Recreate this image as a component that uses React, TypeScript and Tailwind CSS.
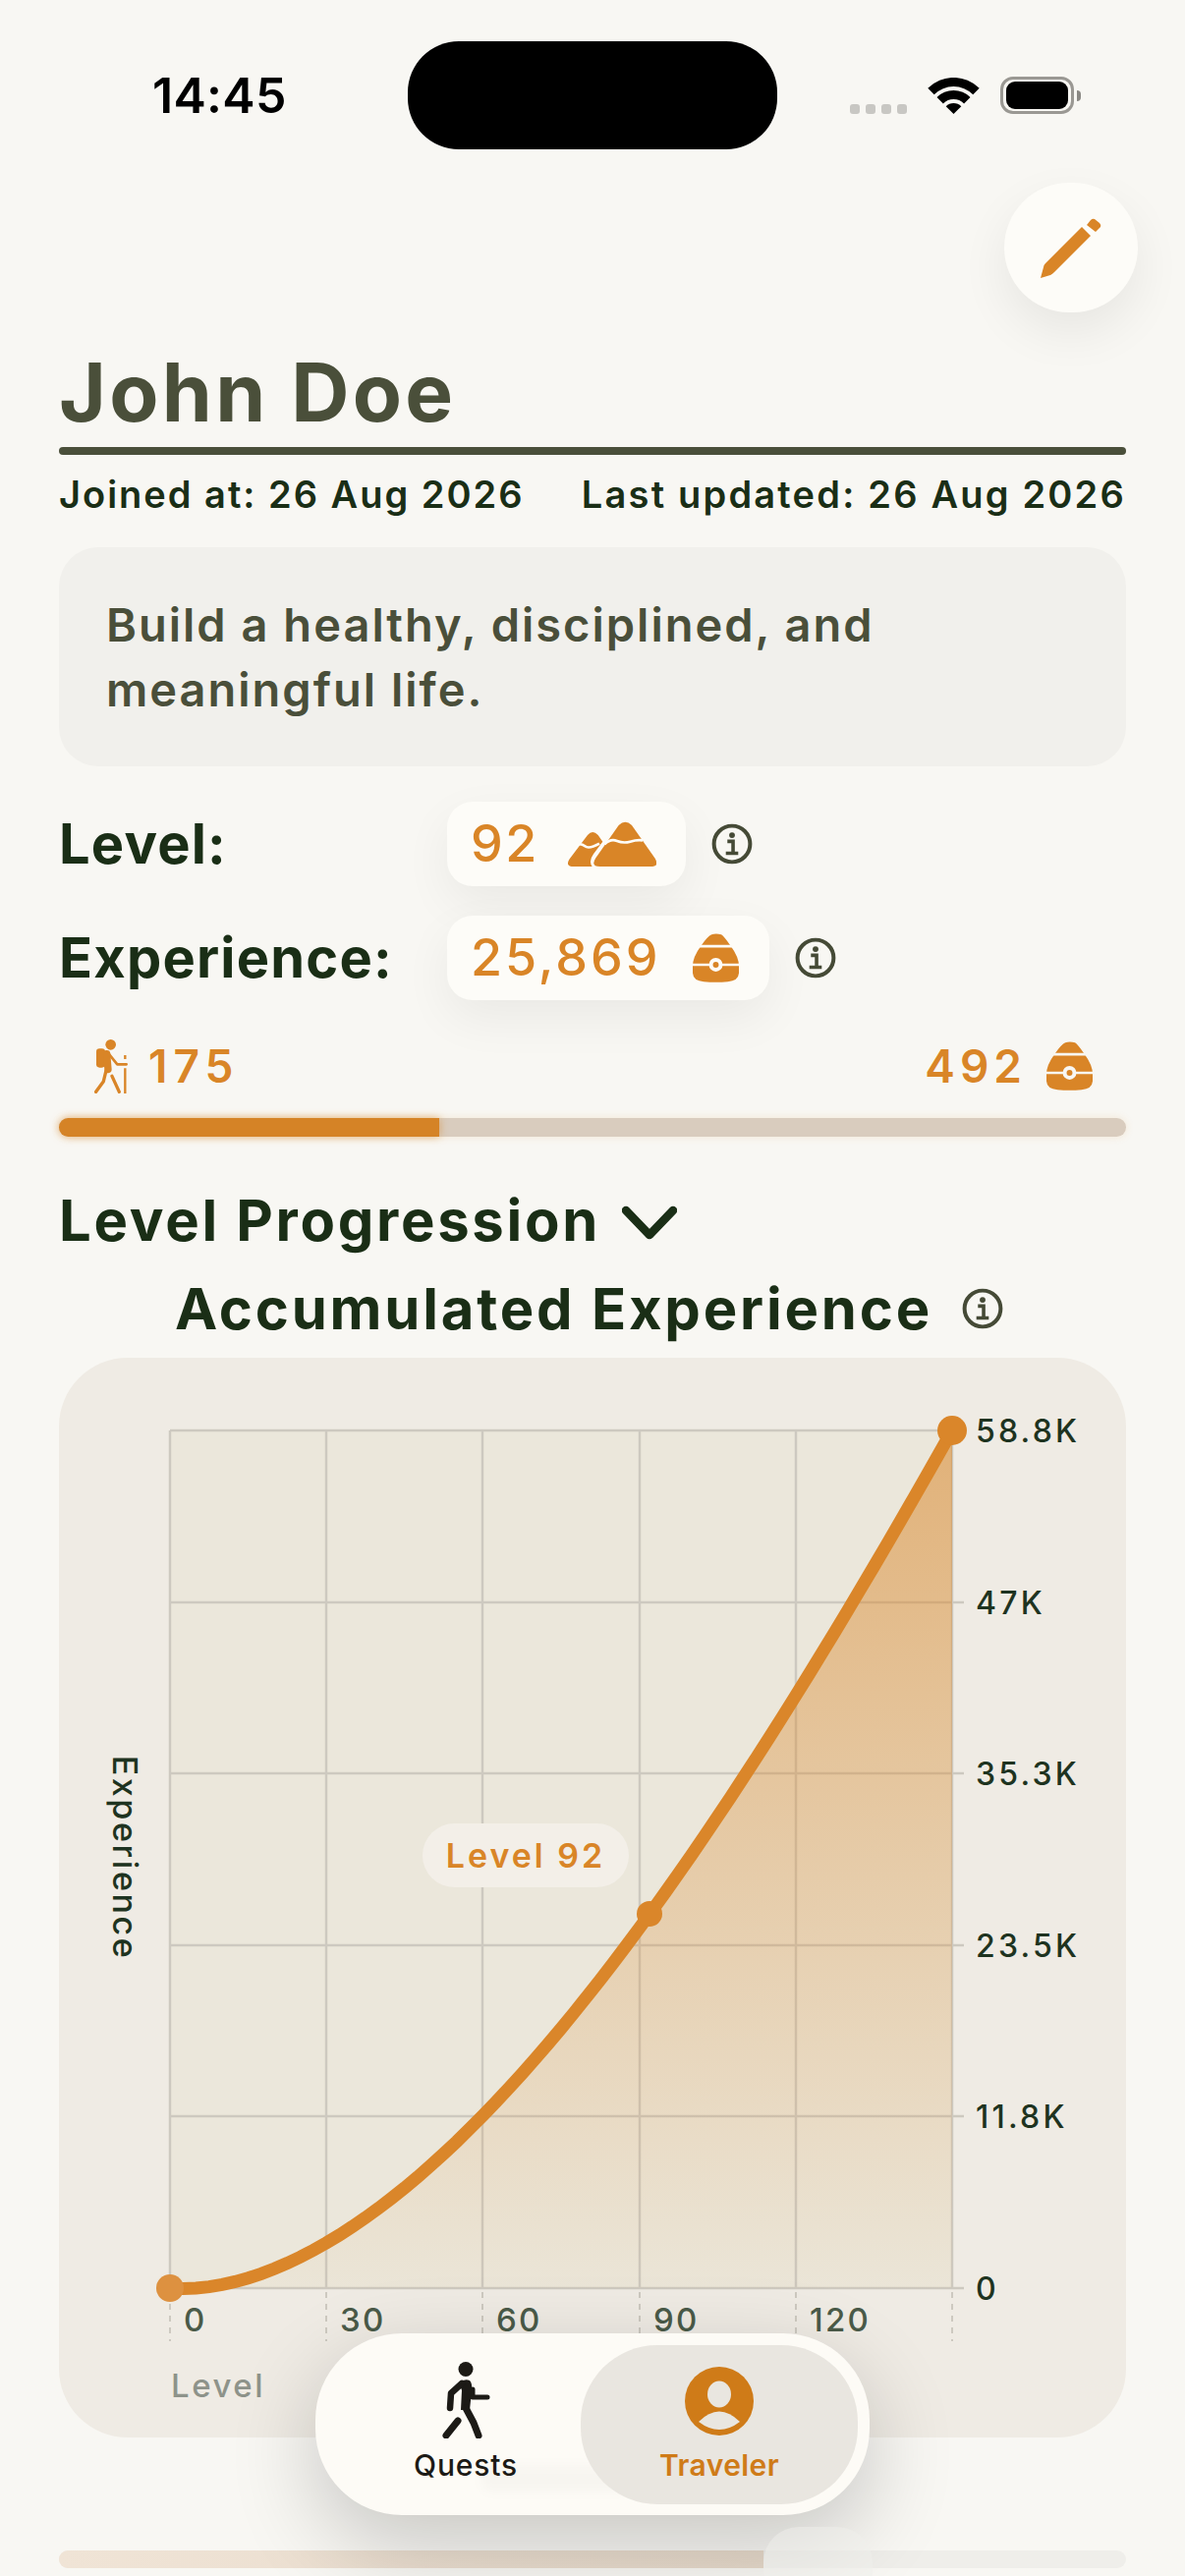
import React from "react";

const ORANGE = "#d98527";

const InfoIcon = () => (
  <svg width="42" height="42" viewBox="0 0 40 40" className="shrink-0">
    <circle cx="20" cy="20" r="17.5" fill="none" stroke="#454a36" strokeWidth="3.8" />
    <circle cx="20" cy="11.5" r="2.8" fill="#454a36" />
    <path d="M15.5 17.5h5.5v11M14 29h12" fill="none" stroke="#454a36" strokeWidth="3.4" />
  </svg>
);

const MountainIcon = () => (
  <svg width="90" height="46" viewBox="0 0 270 138">
    <path d="M155 12Q175-8 195 12L265 112Q282 138 252 138L98 138Q68 138 85 112Z" fill={ORANGE} />
    <path d="M60 42Q75 24 92 42L106 62L78 100Q62 122 74 138L18 138Q-10 138 5 115Z" fill={ORANGE} />
    <path d="M112 70Q130 52 150 60T190 62T228 58" fill="none" stroke="#fdfcf8" strokeWidth="8" />
    <path d="M24 72Q40 66 52 76T96 68" fill="none" stroke="#fdfcf8" strokeWidth="8" />
  </svg>
);

const PotIcon = ({ cut }: { cut: string }) => (
  <svg width="47" height="50" viewBox="0 0 142 150">
    <path d="M58 3Q71-1 88 3Q96 8 116 37Q142 72 142 100L142 122Q140 146 108 148Q71 152 34 148Q2 146 0 122L0 100Q0 72 26 37Q46 8 58 3Z" fill={ORANGE} />
    <path d="M10 39H132M-4 96H146" stroke={cut} strokeWidth="8" />
    <circle cx="71" cy="96" r="21" fill={cut} />
    <circle cx="71" cy="96" r="9" fill={ORANGE} />
  </svg>
);

const HikerIcon = () => (
  <svg width="34" height="55" viewBox="0 0 102 165">
    <circle cx="50" cy="16" r="16" fill={ORANGE} />
    <rect x="6" y="28" width="27" height="58" rx="10" fill={ORANGE} />
    <path d="M38 44L42 92" stroke={ORANGE} strokeWidth="22" strokeLinecap="round" />
    <g fill="none" stroke={ORANGE} strokeWidth="10" strokeLinecap="round" strokeLinejoin="round">
      <path d="M44 44L70 76H98" strokeWidth="8" />
      <path d="M36 95L28 128L5 160" />
      <path d="M54 112L76 160" />
    </g>
    <path d="M94 88V165M94 48V60" stroke={ORANGE} strokeWidth="7" />
  </svg>
);

const WalkIcon = () => (
  <svg width="50" height="78" viewBox="0 0 50 78">
    <circle cx="25" cy="7.5" r="7.5" fill="#1c1a16" />
    <path d="M18 21Q24 17 29 19Q32 22 31 30L29 49L20 49L21 29Z" fill="#1c1a16" />
    <g fill="none" stroke="#1c1a16" strokeLinecap="round" strokeLinejoin="round">
      <path d="M21 22L10 32L9 47" strokeWidth="6.5" />
      <path d="M25 47L33 62L38 75" strokeWidth="7" />
      <path d="M17 60L5 75" strokeWidth="7" />
      <path d="M32 28V36H47" strokeWidth="5" />
    </g>
  </svg>
);

const UserIcon = () => (
  <svg width="70" height="70" viewBox="0 0 70 70">
    <circle cx="35" cy="35" r="35" fill="#cf7b18" />
    <ellipse cx="35" cy="28" rx="12" ry="13.5" fill="#e9e6e0" />
    <path d="M14 56Q35 35 56 56Q35 72 14 56Z" fill="#e9e6e0" />
  </svg>
);

const xTicks = [173, 332, 491, 651, 810, 969];
const yTicks = [
  { y: 1457, label: "58.8K" },
  { y: 1632, label: "47K" },
  { y: 1806, label: "35.3K" },
  { y: 1981, label: "23.5K" },
  { y: 2155, label: "11.8K" },
  { y: 2330, label: "0" },
];
const xLabels = ["0", "30", "60", "90", "120"];

// experience curve, sampled along the plot width
const curve = Array.from({ length: 61 }, (_, i) => {
  const t = i / 60;
  const v = Math.pow(t, 1.75) + 0.22 * (t - 0.4) * (1 - t) * t;
  return `${(173 + t * 796).toFixed(1)},${(2330 - v * 873).toFixed(1)}`;
});

const Chart = () => (
  <div className="mt-[16px] h-[1099px] rounded-[70px] bg-[#efebe4]">
    <svg width="1086" height="1099" viewBox="60 1383 1086 1099" className="block">
      <defs>
        <linearGradient id="area" x1="0" y1="0" x2="0" y2="1">
          <stop offset="0" stopColor={ORANGE} stopOpacity="0.55" />
          <stop offset="1" stopColor={ORANGE} stopOpacity="0.02" />
        </linearGradient>
      </defs>
      <rect x="173" y="1457" width="796" height="873" fill="#ebe7db" />
      {xTicks.map((x) => (
        <g key={x}>
          <line x1={x} y1="1457" x2={x} y2="2330" stroke="#cdc9c0" strokeWidth="2.5" />
          <line x1={x} y1="2334" x2={x} y2="2384" stroke="#cdc9c0" strokeWidth="2" strokeDasharray="6 6" />
        </g>
      ))}
      {yTicks.map((t) => (
        <g key={t.y}>
          <line x1="173" y1={t.y} x2="981" y2={t.y} stroke="#cdc9c0" strokeWidth="2.5" />
          <text x="993" y={t.y + 12} fontSize="32" fontWeight="500" letterSpacing="3.2" fill="#1e3320">
            {t.label}
          </text>
        </g>
      ))}
      {xLabels.map((l, i) => (
        <text key={l} x={xTicks[i] + 14} y="2374" fontSize="33" fontWeight="500" letterSpacing="2.2" fill="#4a5a48">
          {l}
        </text>
      ))}
      <polygon points={`173,2330 ${curve.join(" ")} 969,2330`} fill="url(#area)" />
      <polyline points={curve.join(" ")} fill="none" stroke="#da862a" strokeWidth="13" strokeLinecap="round" />
      <circle cx="173" cy="2330" r="14" fill="#dd9140" />
      <circle cx="661" cy="1949" r="13" fill="#da862a" />
      <circle cx="969" cy="1457" r="15" fill="#da862a" />
      <rect x="430" y="1857" width="210" height="65" rx="32.5" fill="#f3efe8" />
      <text x="535" y="1902" textAnchor="middle" fontSize="34" fontWeight="600" letterSpacing="3" fill={ORANGE}>
        Level 92
      </text>
      <text x="174" y="2441" fontSize="33" fontWeight="500" letterSpacing="2.5" fill="#8e938a">
        Level
      </text>
      <text
        transform="translate(115 1892) rotate(90)"
        textAnchor="middle"
        fontSize="34"
        fontWeight="500"
        letterSpacing="2.6"
        fill="#1e3320"
      >
        Experience
      </text>
    </svg>
  </div>
);

export default function App() {
  return (
    <div className="relative h-[2622px] w-[1206px] overflow-hidden bg-[#f8f7f3] font-['Inter',sans-serif] text-[#1a2e16]">
      {/* status bar */}
      <div className="flex h-[150px] items-start pt-[42px]">
        <div className="flex h-[110px] w-[415px] items-center pl-[155px] text-[50px] font-semibold tracking-[0.3px] text-black">
          14:45
        </div>
        <div className="h-[110px] w-[376px] rounded-[52px] bg-black" />
        <div className="ml-[74px] flex h-[110px] items-start">
          <div className="mt-[64px] flex gap-[6px]">
            {[0, 1, 2, 3].map((i) => (
              <span key={i} className="h-[10px] w-[10px] rounded-[3px] bg-[#c8c7c3]" />
            ))}
          </div>
          <svg width="53" height="37" viewBox="-1 0 53 37" className="ml-[21px] mt-[37px]">
            <path d="M-.7 10.8A37 37 0 0 1 51.7 10.8L45.3 17.2A28 28 0 0 0 5.7 17.2Z" fill="#000" />
            <path d="M8.5 20A24 24 0 0 1 42.5 20L36.1 26.4A15 15 0 0 0 14.9 26.4Z" fill="#000" />
            <path d="M17.7 29.2A11 11 0 0 1 33.3 29.2L25.5 37Z" fill="#000" />
          </svg>
          <div className="ml-[21px] mt-[36px] flex items-center">
            <div className="flex h-[38px] w-[75px] items-center justify-center rounded-[13px] border-[3px] border-[#9a9893]">
              <div className="h-[28px] w-[63px] rounded-[9px] bg-black" />
            </div>
            <div className="ml-[3px] h-[11px] w-[4px] rounded-r-[4px] bg-[#8a8883]" />
          </div>
        </div>
      </div>

      {/* edit button */}
      <div className="mr-[48px] mt-[36px] flex justify-end">
        <div className="flex h-[132px] w-[136px] items-center justify-center rounded-full bg-[#fdfcf8] shadow-[0_20px_50px_rgba(0,0,0,0.07)]">
          <svg width="62" height="61" viewBox="0 0 62 61" fill={ORANGE}>
            <path d="M0 61L3 50Q3 48 5 46L42 9L51 18L14 55Q12 57 10 58Z" />
            <path d="M47 7L51 2Q53 0 55 1L60 5Q62 7 61 9L56 14Z" />
          </svg>
        </div>
      </div>

      <div className="px-[60px]">
        <h1 className="mt-[27px] h-[110px] text-[82px] font-bold leading-[110px] tracking-[3.3px] text-[#4a4f3a]">
          John Doe
        </h1>
        <div className="h-[8px] rounded-full bg-[#4a4f3a]" />
        <div className="mt-[16px] flex h-[48px] items-center justify-between text-[38px] font-semibold leading-[48px] tracking-[2.2px]">
          <span className="tracking-[2px]">Joined at: 26 Aug 2026</span>
          <span>Last updated: 26 Aug 2026</span>
        </div>

        <div className="mt-[30px] h-[223px] rounded-[40px] bg-[#f1f0ec] pl-[48px] pt-[46px] text-[47px] font-semibold leading-[66px] tracking-[2px] text-[#4a4f3a]">
          Build a healthy, disciplined, and
          <br />
          meaningful life.
        </div>

        <div className="mt-[36px] flex h-[86px] items-center">
          <span className="w-[395px] text-[56px] font-bold tracking-[1.2px]">Level:</span>
          <div className="flex h-[86px] w-[243px] items-center rounded-[26px] bg-[#fdfcf8] pl-[24px] text-[52px] font-medium tracking-[2.5px] text-[#d98527] shadow-[0_18px_50px_rgba(0,0,0,0.06)]">
            <span className="w-[99px]">92</span>
            <MountainIcon />
          </div>
          <div className="ml-[26px]">
            <InfoIcon />
          </div>
        </div>
        <div className="mt-[30px] flex h-[86px] items-center">
          <span className="w-[395px] text-[56px] font-bold tracking-[1.2px]">Experience:</span>
          <div className="flex h-[86px] w-[328px] items-center rounded-[26px] bg-[#fdfcf8] pl-[24px] text-[52px] font-medium tracking-[3px] text-[#d98527] shadow-[0_18px_50px_rgba(0,0,0,0.06)]">
            <span className="w-[226px]">25,869</span>
            <PotIcon cut="#fdfcf8" />
          </div>
          <div className="ml-[26px]">
            <InfoIcon />
          </div>
        </div>

        <div className="mt-[38px] flex h-[58px] items-center justify-between pl-[36px] pr-[34px] text-[46px] font-semibold tracking-[5px] text-[#d98527]">
          <div className="flex items-center gap-[21px]">
            <HikerIcon />
            <span className="tracking-[6px]">175</span>
          </div>
          <div className="flex items-center gap-[20px]">
            <span>492</span>
            <PotIcon cut="#f8f7f3" />
          </div>
        </div>
        <div className="mt-[24px] h-[19px] rounded-full bg-[#d9ccbe] shadow-[0_0_8px_rgba(217,133,39,0.15)]">
          <div className="h-full w-[387px] rounded-l-full rounded-r-[4px] bg-[#d58326] shadow-[0_0_8px_rgba(217,133,39,0.6)]" />
        </div>

        <div className="mt-[51px] flex h-[68px] items-center gap-[22px] text-[58px] font-bold tracking-[2.7px]">
          <span>Level Progression</span>
          <svg width="56" height="36" viewBox="0 0 56 36" className="mt-[6px]">
            <path d="M4 5L28 30L52 5" fill="none" stroke="#1a2e16" strokeWidth="8.5" strokeLinecap="round" strokeLinejoin="round" />
          </svg>
        </div>
        <div className="mt-[22px] flex h-[68px] items-center justify-center gap-[30px] pr-[7px] text-[58px] font-bold tracking-[2.8px]">
          <span>Accumulated Experience</span>
          <InfoIcon />
        </div>

        <Chart />

        <div className="mt-[115px] h-[18px] overflow-hidden rounded-full bg-[#efeeea]">
          <div className="h-full w-[717px] bg-gradient-to-r from-[#f0e4d6] to-[#e6d9ca]" />
        </div>
      </div>

      {/* tab bar */}
      <div className="absolute left-[321px] top-[2375px] flex h-[185px] w-[564px] items-center rounded-[88px] bg-[#fdfbf6] pr-[12px] shadow-[0_30px_90px_rgba(0,0,0,0.2)]">
        <div className="absolute left-[170px] top-[135px] h-[26px] w-[150px] rounded-[8px] bg-black/[0.025] blur-[6px]" />
        <div className="relative flex w-[270px] flex-col items-center pl-[36px] text-[30px] font-medium tracking-[0.8px] text-[#1c1a16]">
          <div className="mb-[7px] mt-[-5px]">
            <WalkIcon />
          </div>
          <span className="mt-[2px] leading-[36px]">Quests</span>
        </div>
        <div className="relative flex h-[162px] w-[282px] flex-col items-center justify-center rounded-[78px] bg-[#e9e6e0] text-[30px] font-semibold tracking-[0.4px] text-[#cf7b18]">
          <UserIcon />
          <span className="mt-[12px] leading-[36px]">Traveler</span>
        </div>
      </div>

      {/* slider thumb peeking out under the tab bar */}
      <div className="absolute left-[777px] top-[2572px] h-[80px] w-[111px] rounded-[36px] bg-[#efefeb]/50" />
    </div>
  );
}
